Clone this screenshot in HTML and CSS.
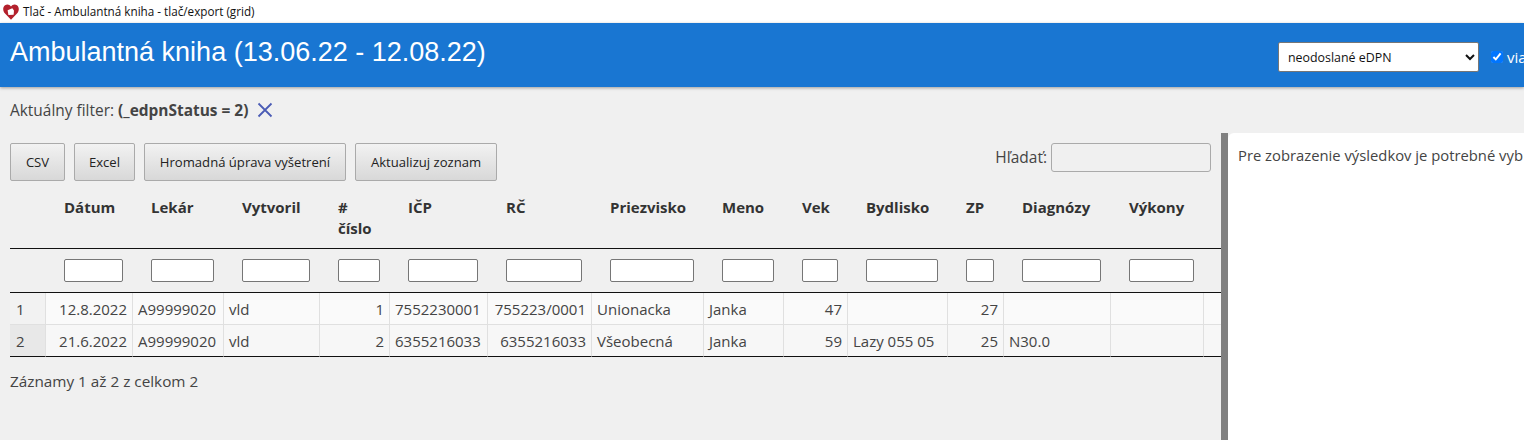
FILE: index.html
```html
<!DOCTYPE html>
<html lang="sk">
<head>
<meta charset="utf-8">
<title>Tlač - Ambulantná kniha - tlač/export (grid)</title>
<link rel="stylesheet" href="styles.css">
</head>
<body>
<div class="titlebar">
  <svg class="logo" viewBox="0 0 16 16" width="16" height="16"><path d="M8 15.800 1.300 8.800C-.4 6.400-.1 2.900 2 1.300 4.100-.1 6.700.5 8 2.600 9.300.5 11.900-.1 14 1.300c2.100 1.600 2.400 5.100.7 7.500Z" fill="#b3202c"/><path d="M4.600 6.300 9.300 4.300 11 6.600 10.600 10.700 5.400 11Z" fill="#fff"/></svg>
  <span>Tlač - Ambulantná kniha - tlač/export (grid)</span>
</div>
<header class="header">
  <h1 class="title">Ambulantná kniha (13.06.22 - 12.08.22)</h1>
  <div class="header-tools">
    <select class="status"><option>neodoslané eDPN</option></select>
    <label class="more"><input type="checkbox" checked>via</label>
  </div>
</header>
<div class="filter">
  <span>Aktuálny filter: <b>(_edpnStatus = 2)</b></span>
  <svg class="clear" viewBox="0 0 16 16" width="16" height="16"><path d="M1.500 1.500 14.500 14.500M14.500 1.500 1.500 14.500" stroke="#4b5cb5" stroke-width="1.800" fill="none"/></svg>
</div>
<main class="main">
  <section class="left">
    <div class="toolbar">
      <button class="btn w-csv">CSV</button>
      <button class="btn w-excel">Excel</button>
      <button class="btn w-bulk">Hromadná úprava vyšetrení</button>
      <button class="btn w-refresh">Aktualizuj zoznam</button>
      <label class="search">Hľadať:<input type="text"></label>
    </div>
    <table class="grid">
      <colgroup>
        <col class="c1"><col class="c2"><col class="c3"><col class="c4"><col class="c5"><col class="c6"><col class="c7"><col class="c8"><col class="c9"><col class="c10"><col class="c11"><col class="c12"><col class="c13"><col class="c14"><col class="c15">
      </colgroup>
      <thead>
        <tr class="heads">
          <th></th><th>Dátum</th><th>Lekár</th><th>Vytvoril</th><th># číslo</th><th>IČP</th><th>RČ</th><th>Priezvisko</th><th>Meno</th><th>Vek</th><th>Bydlisko</th><th>ZP</th><th>Diagnózy</th><th>Výkony</th><th></th>
        </tr>
        <tr class="filters">
          <th></th><th><input></th><th><input></th><th><input></th><th><input></th><th><input></th><th><input></th><th><input></th><th><input></th><th><input></th><th><input></th><th><input></th><th><input></th><th><input></th><th></th>
        </tr>
      </thead>
      <tbody>
        <tr class="odd">
          <td class="idx">1</td><td class="r">12.8.2022</td><td>A99999020</td><td>vld</td><td class="r">1</td><td>7552230001</td><td class="r">755223/0001</td><td>Unionacka</td><td>Janka</td><td class="r">47</td><td></td><td class="r">27</td><td></td><td></td><td></td>
        </tr>
        <tr class="even">
          <td class="idx">2</td><td class="r">21.6.2022</td><td>A99999020</td><td>vld</td><td class="r">2</td><td>6355216033</td><td class="r">6355216033</td><td>Všeobecná</td><td>Janka</td><td class="r">59</td><td>Lazy 055 05</td><td class="r">25</td><td>N30.0</td><td></td><td></td>
        </tr>
      </tbody>
    </table>
    <p class="info">Záznamy 1 až 2 z celkom 2</p>
  </section>
  <div class="splitter"></div>
  <section class="right">Pre zobrazenie výsledkov je potrebné vyb</section>
</main>
</body>
</html>
```
FILE: styles.css
```css
* { box-sizing: border-box; }
html, body { height: 100%; }
body {
  margin: 0;
  display: flex;
  flex-direction: column;
  overflow: hidden;
  background: #f0f0f0;
  color: #444;
  font: 15px/21px "Open Sans", sans-serif;
}
.titlebar {
  height: 23px;
  flex: none;
  display: flex;
  align-items: center;
  gap: 4px;
  padding-left: 3px;
  background: #fff;
  color: #111;
  font-size: 11.700px;
}
.logo { flex: none; }
.header {
  height: 64px;
  flex: none;
  display: flex;
  align-items: center;
  justify-content: space-between;
  padding-left: 10px;
  background: #1976d2;
  box-shadow: 0 1px 3px rgba(0,0,0,.35);
  color: #fff;
}
.title {
  margin: 0 0 6px;
  font: 400 27px/34px "Liberation Sans", Arial, sans-serif;
}
.header-tools {
  width: 246px;
  flex: none;
  display: flex;
  align-items: center;
  gap: 13px;
  margin-top: 4px;
  overflow: hidden;
}
.status {
  width: 201px;
  height: 30px;
  flex: none;
  padding-left: 5px;
  border: 1px solid #767676;
  border-radius: 2px;
  background: #fff;
  color: #111;
  font: 12.400px "Open Sans", sans-serif;
}
.more {
  display: flex;
  align-items: center;
  gap: 4px;
  margin-left: -1px;
  white-space: nowrap;
}
.more input { width: 12px; height: 12px; margin: 0; accent-color: #0075ff; }
.filter {
  height: 46px;
  flex: none;
  display: flex;
  align-items: center;
  gap: 9px;
  padding-left: 10px;
  font-size: 15.450px;
}
.clear { flex: none; }
.main {
  flex: 1;
  min-height: 0;
  display: flex;
}
.left {
  width: 1221px;
  flex: none;
  padding: 10px 0 0 10px;
}
.toolbar {
  display: flex;
  align-items: flex-start;
  gap: 9px;
  padding-right: 10px;
}
.btn {
  height: 38px;
  padding: 0;
  border: 1px solid #aaa;
  border-radius: 2px;
  background: linear-gradient(#f2f2f2, #d8d8d8);
  color: #222;
  font: 13.100px "Open Sans", sans-serif;
}
.w-csv { width: 55px; }
.w-excel { width: 61px; }
.w-bulk { width: 202px; }
.w-refresh { width: 142px; }
.search {
  margin-left: auto;
  display: flex;
  align-items: center;
  gap: 4px;
  height: 29px;
  font-size: 15.500px;
}
.search input {
  width: 160px;
  height: 29px;
  border: 1px solid #aaa;
  border-radius: 3px;
  background: #f0f0f0;
}
.grid {
  width: 1211px;
  margin-top: 10px;
  table-layout: fixed;
  border-collapse: separate;
  border-spacing: 0;
}
.c1 { width: 36px; }
.c2 { width: 87px; }
.c3 { width: 91px; }
.c4 { width: 96px; }
.c5 { width: 70px; }
.c6 { width: 98px; }
.c7 { width: 104px; }
.c8 { width: 112px; }
.c9 { width: 80px; }
.c10 { width: 64px; }
.c11 { width: 100px; }
.c12 { width: 56px; }
.c13 { width: 107px; }
.c14 { width: 93px; }
.c15 { width: 17px; }
.heads th {
  height: 58px;
  padding: 6px 10px 0 18px;
  border-bottom: 1px solid #111;
  text-align: left;
  vertical-align: top;
  font-weight: 700;
  color: #333;
}
.filters th {
  height: 44px;
  padding: 0 10px 0 18px;
  border-bottom: 1px solid #111;
  vertical-align: middle;
}
.filters input {
  display: block;
  width: 100%;
  height: 23px;
  padding: 0;
  border: 1px solid #767676;
  border-radius: 2px;
  background: #fff;
}
.grid td {
  height: 32px;
  padding: 1px 5px 0;
  border-right: 1px solid #e0e0e0;
  border-bottom: 1px solid #e0e0e0;
  white-space: nowrap;
  overflow: hidden;
  background: #fafafa;
}
.grid td:last-child { border-right: 0; }
.even td { background: #f7f7f7; }
.grid .even td { border-bottom-color: #111; }
.grid .idx { background: #f2f2f2; padding-left: 6px; }
.grid .even .idx { background: #e8e8e8; }
.grid .r { text-align: right; }
.info { margin: 14px 0 0; font-size: 15.300px; }
.splitter {
  width: 7px;
  flex: none;
  background: #808080;
}
.right {
  flex: 1;
  min-width: 0;
  padding: 12px 10px;
  border-top-left-radius: 6px;
  background: #fff;
  white-space: nowrap;
  overflow: hidden;
  font-size: 14.800px;
}
```
